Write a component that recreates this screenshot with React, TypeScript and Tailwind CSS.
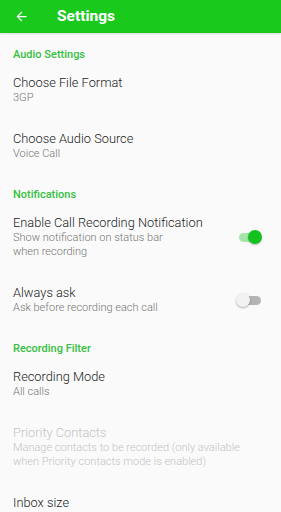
import React from 'react'

type Item = {
  title: string
  summary?: string
  toggle?: boolean
  disabled?: boolean
}

type Section = { header: string; items: Item[] }

const sections: Section[] = [
  {
    header: 'Audio Settings',
    items: [
      { title: 'Choose File Format', summary: '3GP' },
      { title: 'Choose Audio Source', summary: 'Voice Call' },
    ],
  },
  {
    header: 'Notifications',
    items: [
      {
        title: 'Enable Call Recording Notification',
        summary: 'Show notification on status bar\nwhen recording',
        toggle: true,
      },
      { title: 'Always ask', summary: 'Ask before recording each call', toggle: false },
    ],
  },
  {
    header: 'Recording Filter',
    items: [
      { title: 'Recording Mode', summary: 'All calls' },
      {
        title: 'Priority Contacts',
        summary: 'Manage contacts to be recorded (only available\nwhen Priority contacts mode is enabled)',
        disabled: true,
      },
      { title: 'Inbox size', summary: '' },
    ],
  },
]

function Toggle({ on }: { on: boolean }) {
  return (
    <div className="relative h-[14px] w-[26px] shrink-0">
      <div
        className={
          on
            ? 'absolute left-[3px] top-[2.5px] h-[9px] w-[22px] rounded-full bg-[#a6e5aa]'
            : 'absolute left-[3px] top-[2.5px] h-[9px] w-[22px] rounded-full bg-[#b4b4b4]'
        }
      />
      {on ? (
        <div className="absolute right-0 top-0 h-[14px] w-[14px] rounded-full bg-[#13c21e] shadow-[0_1px_2px_rgba(0,0,0,0.25)]" />
      ) : (
        <div className="absolute left-0 top-0 h-[14px] w-[14px] rounded-full bg-[#f2f2f2] shadow-[0_1px_2px_rgba(0,0,0,0.3)]" />
      )}
    </div>
  )
}

export default function App() {
  return (
    <div className="h-[512px] w-[281px] overflow-hidden bg-[#fafafa] font-['Roboto',sans-serif]">
      {/* toolbar */}
      <div className="flex h-[33px] items-center bg-[#19c91c] shadow-[0_1px_2px_rgba(0,0,0,0.15)]">
        <svg className="ml-[14px] h-[15px] w-[15px]" viewBox="0 0 24 24" fill="white">
          <path d="M20 11H7.83l5.59-5.59L12 4l-8 8 8 8 1.41-1.41L7.83 13H20v-2z" />
        </svg>
        <span className="ml-[28px] text-[15.5px] font-bold text-white">Settings</span>
      </div>

      {sections.map((section, i) => (
        <div key={section.header}>
          <div
            className={`${i === 0 ? 'pt-[15px]' : 'pt-[14px]'} px-[13px] text-[11px] font-medium leading-[14px] text-[#35c03e]`}
          >
            {section.header}
          </div>
          {section.items.map((item) => (
            <div key={item.title} className="flex items-center py-[13px] pl-[13px] pr-[19px]">
              <div className="min-w-0 flex-1">
                <div
                  className={`text-[12.8px] font-light leading-[16px] ${item.disabled ? 'text-[#c4c4c4]' : 'text-[#1c1c1c]'}`}
                >
                  {item.title}
                </div>
                {item.summary !== undefined && (
                  <div
                    className={`min-h-[14px] whitespace-pre-line text-[11px] font-light leading-[14px] ${item.disabled ? 'text-[#c4c4c4]' : 'text-[#757575]'}`}
                  >
                    {item.summary}
                  </div>
                )}
              </div>
              {item.toggle !== undefined && <Toggle on={item.toggle} />}
            </div>
          ))}
        </div>
      ))}
    </div>
  )
}
